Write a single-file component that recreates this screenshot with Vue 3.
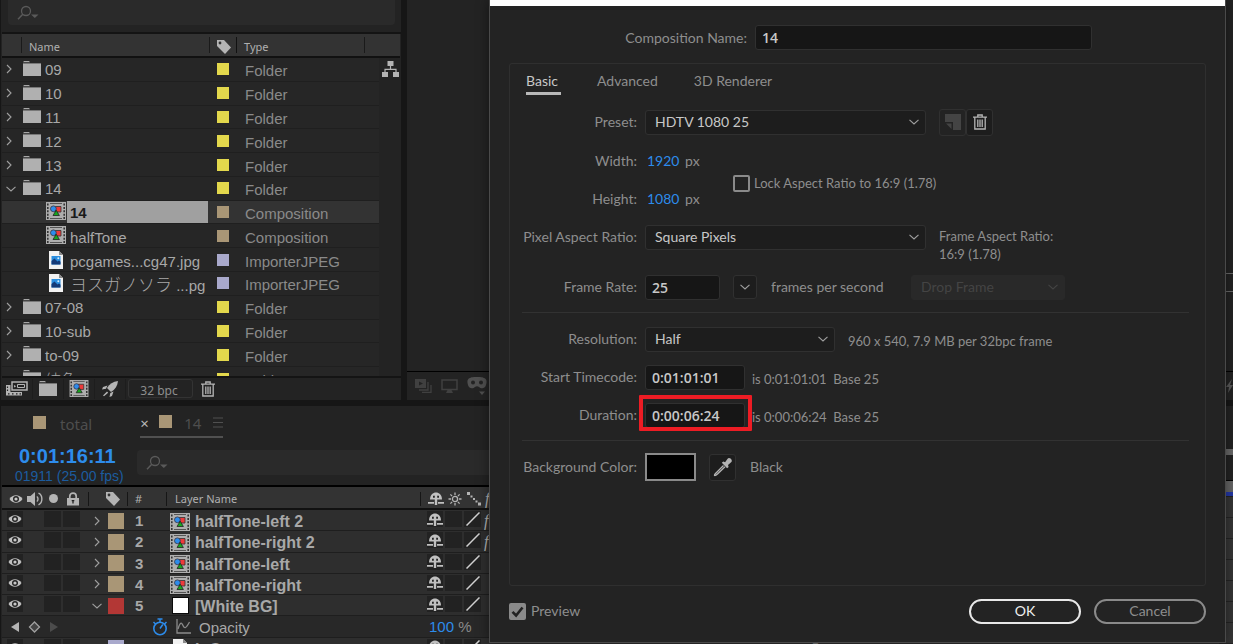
<script setup>
import { ref } from 'vue'

const YELLOW = '#e3d84c'
const SAND = '#a99676'
const LAVENDER = '#a9a9cc'

const items = [
  { name: '09', kind: 'folder', color: YELLOW, type: 'Folder' },
  { name: '10', kind: 'folder', color: YELLOW, type: 'Folder' },
  { name: '11', kind: 'folder', color: YELLOW, type: 'Folder' },
  { name: '12', kind: 'folder', color: YELLOW, type: 'Folder' },
  { name: '13', kind: 'folder', color: YELLOW, type: 'Folder' },
  { name: '14', kind: 'folder', color: YELLOW, type: 'Folder', open: true },
  { name: '14', kind: 'comp', color: SAND, type: 'Composition', selected: true },
  { name: 'halfTone', kind: 'comp', color: SAND, type: 'Composition' },
  { name: 'pcgames...cg47.jpg', kind: 'image', color: LAVENDER, type: 'ImporterJPEG' },
  { cjk: 'ヨスガノソラ', name: ' ...pg', kind: 'image', color: LAVENDER, type: 'ImporterJPEG' },
  { name: '07-08', kind: 'folder', color: YELLOW, type: 'Folder' },
  { name: '10-sub', kind: 'folder', color: YELLOW, type: 'Folder' },
  { name: 'to-09', kind: 'folder', color: YELLOW, type: 'Folder' },
  { cjk: '纯色', name: '', kind: 'folder', color: YELLOW, type: 'Folder', open: true },
]

const layers = [
  { n: 1, name: 'halfTone-left 2', kind: 'comp', color: SAND, fx: true },
  { n: 2, name: 'halfTone-right 2', kind: 'comp', color: SAND, fx: true },
  { n: 3, name: 'halfTone-left', kind: 'comp', color: SAND },
  { n: 4, name: 'halfTone-right', kind: 'comp', color: SAND },
  { n: 5, name: '[White BG]', kind: 'solid', color: '#b33735', open: true },
]

const compName = ref('14')
const frameRate = ref('25')
const startTimecode = ref('0:01:01:01')
const duration = ref('0:00:06:24')
const lockAspect = ref(false)
const preview = ref(true)
const tabs = ['Basic', 'Advanced', '3D Renderer']
const activeTab = ref('Basic')
</script>

<template>
  <div class="app">
    <svg class="sprite" aria-hidden="true">
      <symbol id="i-folder" viewBox="0 0 18 15">
        <path d="M1 0h5l1 1.3H0z" fill="#a8a8a8" />
        <path d="M0 2.4h18V15H0z" fill="#b0b0b0" />
      </symbol>
      <symbol id="i-comp" viewBox="0 0 20 18">
        <path d="M0 0h20v18H0z" fill="#aeaeae" />
        <path d="M1 1.5h1.6v2H1zm0 3.4h1.6v2H1zm0 3.4h1.6v2H1zm0 3.4h1.6v2H1zm0 3.3h1.6v2H1zM17.4 1.5H19v2h-1.6zm0 3.4H19v2h-1.6zm0 3.4H19v2h-1.6zm0 3.4H19v2h-1.6zm0 3.3H19v2h-1.6z" fill="#333" />
        <path d="M4 1.5h12M4 16.5h12" stroke="#555" />
        <path d="M9.500 4.500h5.500v5.500h-5.500z" fill="#ee3a3a" stroke="#333" stroke-width=".8" />
        <circle cx="7.400" cy="6.800" r="2.900" fill="#2d8ceb" stroke="#334" stroke-width=".8" />
        <path d="M10.200 8.200l3.200 5.300H7z" fill="#17a51f" stroke="#222" stroke-width=".8" />
      </symbol>
      <symbol id="i-image" viewBox="0 0 14 18">
        <path d="M0 0h10l4 4v14H0z" fill="#f2f2f2" />
        <path d="M10 0v4h4z" fill="#8c8c8c" />
        <path d="M2.5 5h9v8.500h-9z" fill="#2b8fe0" />
        <path d="M2.500 10l3-2.500 3 3 1.500-1 1.500 1.200v2.800h-9z" fill="#143a78" />
        <circle cx="9.300" cy="7.200" r="1" fill="#d8efff" />
      </symbol>
      <symbol id="i-tag" viewBox="0 0 16 16">
        <path d="M1 1h7l7 7.500L9 15 1 7z" fill="#b4b4b4" />
        <circle cx="4" cy="4" r="1.400" fill="#333" />
      </symbol>
      <symbol id="i-right" viewBox="0 0 8 12">
        <path d="M2 2l4 4-4 4" fill="none" stroke="currentColor" stroke-width="1.100" />
      </symbol>
      <symbol id="i-down" viewBox="0 0 12 8">
        <path d="M1.500 1.800L6 6l4.500-4.200" fill="none" stroke="currentColor" stroke-width="1.100" />
      </symbol>
      <symbol id="i-search" viewBox="0 0 22 16">
        <circle cx="9" cy="6" r="4.500" fill="none" stroke="#5a5a5a" stroke-width="1.300" />
        <path d="M5.800 9.200L1 14.200" stroke="#5a5a5a" stroke-width="1.500" />
        <path d="M14 9.500h7.500L17.800 13z" fill="#5a5a5a" />
      </symbol>
      <symbol id="i-flow" viewBox="0 0 17 17">
        <path d="M5.500 0h6v5h-6zM0 11h6v5H0zM11 11h6v5h-6z" fill="#b4b4b4" />
        <path d="M8.500 5v3M3 11V8.300h11V11" fill="none" stroke="#b4b4b4" stroke-width="1.200" />
      </symbol>
      <symbol id="i-trash" viewBox="0 0 14 16">
        <path d="M0 3.200h14M4.800 3V1h4.400v2M1.800 3.500V15h10.400V3.500M4.800 5.500v7.500M7 5.500v7.500M9.200 5.500v7.500" fill="none" stroke="#b4b4b4" stroke-width="1.300" />
      </symbol>
      <symbol id="i-interpret" viewBox="0 0 22 15">
        <path d="M6 1h15v8H6z" fill="none" stroke="#b4b4b4" stroke-width="1.500" />
        <path d="M11.500 3.500h7v3h-7z" fill="none" stroke="#b4b4b4" />
        <path d="M8 4l2.200 1.300L8 6.500z" fill="#b4b4b4" />
        <path d="M0 4h4.500v7H16v3.500H0z" fill="#b4b4b4" />
        <path d="M1.500 5.500v1.500M1.500 8.500V10M2 12.800h1.500M6 12.800h1.500M10 12.800h1.500M13.500 12.800H15" stroke="#222" stroke-width="1.200" />
      </symbol>
      <symbol id="i-rocket" viewBox="0 0 16 16">
        <path d="M16 0c-5 .6-8.500 3-11 7l4 4c4-2.500 6.500-6 7-11z" fill="#b4b4b4" />
        <path d="M5.500 4.500L1 6 0 8.500l4-.8zM11.500 10.500L10 15l-2.500 1 .8-4zM5 10.500l1.200 1.200L2 15.200 1 14.500z" fill="#b4b4b4" />
      </symbol>
      <symbol id="i-eye" viewBox="0 0 14 10">
        <path d="M.5 5C3.500 0 10.500 0 13.500 5 10.500 10 3.500 10 .5 5z" fill="#c0c0c0" />
        <circle cx="7" cy="5" r="3" fill="#252525" />
        <circle cx="7" cy="5" r="1.600" fill="#c8c8c8" />
      </symbol>
      <symbol id="i-speaker" viewBox="0 0 16 14">
        <path d="M0 4h3.500L8 0v14l-4.500-4H0z" fill="#b4b4b4" />
        <path d="M9.800 4.500c1.600 1 1.600 4 0 5M11.500 1.200c4.500 2.200 4.500 9.400 0 11.600" fill="none" stroke="#b4b4b4" stroke-width="1.400" />
      </symbol>
      <symbol id="i-lock" viewBox="0 0 12 14">
        <path d="M2.800 7V4.200c0-4.200 6.400-4.200 6.400 0V7" fill="none" stroke="#b4b4b4" stroke-width="1.700" />
        <path d="M0 6h12v7.500H0z" fill="#b4b4b4" />
        <path d="M6 8v3.500M4.700 8.700h2.600" stroke="#222" stroke-width="1.300" />
      </symbol>
      <symbol id="i-shy" viewBox="0 0 16 13">
        <path d="M2 7.500C2 -1.900 14 -1.900 14 7.500z" fill="#c0c0c0" />
        <path d="M5 3.800h2v2H5zM9 3.800h2v2H9z" fill="#252525" />
        <path d="M8 4v9" stroke="#c0c0c0" stroke-width="2.400" />
        <path d="M0 10.800h6M10 10.800h6" stroke="#c0c0c0" stroke-width="1.800" />
      </symbol>
      <symbol id="i-sun" viewBox="0 0 14 14">
        <circle cx="7" cy="7" r="2.600" fill="none" stroke="#b4b4b4" stroke-width="1.300" />
        <path d="M7 .5v2.500M7 11v2.500M.5 7H3M11 7h2.500M2.400 2.400l1.700 1.700M9.900 9.900l1.700 1.700M11.600 2.400L9.900 4.100M4.100 9.900l-1.700 1.700" stroke="#b4b4b4" stroke-width="1.300" />
      </symbol>
      <symbol id="i-quality" viewBox="0 0 14 14">
        <path d="M0 0h3v3H0zM3.500 3.500h2v2h-2zM6 6h2v2H6zM8.500 8.500h2v2h-2zM11 10.500h3v3h-3z" fill="#b4b4b4" />
      </symbol>
      <symbol id="i-slash" viewBox="0 0 14 14">
        <path d="M.5 13.500l13-13" stroke="#d0d0d0" stroke-width="1.500" />
      </symbol>
      <symbol id="i-watch" viewBox="0 0 16 18">
        <circle cx="8" cy="10.500" r="6.200" fill="none" stroke="#2d8ceb" stroke-width="1.600" />
        <path d="M5.500 1h5M8 1v3M8 10.500l2.800-4M1.500 4l2 2M14.500 4l-2 2" stroke="#2d8ceb" stroke-width="1.500" />
      </symbol>
      <symbol id="i-graph" viewBox="0 0 15 15">
        <path d="M1 0v14h14" fill="none" stroke="#8a8a8a" stroke-width="1.300" />
        <path d="M2 10c2-7 3.500-7 5-3.500s3 3 6.500-3.500" fill="none" stroke="#8a8a8a" stroke-width="1.300" />
      </symbol>
      <symbol id="i-preset" viewBox="0 0 16 16">
        <path d="M0 0h16v16H8V8H0z" fill="#444" />
        <path d="M1 9.500h5.500V15z" fill="#444" />
      </symbol>
      <symbol id="i-dropper" viewBox="0 0 20 20">
        <path d="M10.500 8.500L3 16c-1.500 1.500-1.800 1.600-1.500 2.500.9.300 1.500 0 3-1.500L12 9.800" fill="none" stroke="#b4b4b4" stroke-width="1.300" />
        <path d="M8.800 5.800l1.500-1.300 1.800.8 2.500-3.500c1.500-2 5.500.8 3.800 3.300L15 8l.6 2-1.500 1.300z" fill="#b4b4b4" />
      </symbol>
      <symbol id="i-tick" viewBox="0 0 17 17">
        <path d="M3.500 8.800l3.600 3.700 6.400-8" fill="none" stroke="#232323" stroke-width="2.600" />
      </symbol>
    </svg>

    <div class="top">
      <section class="project">
        <div class="search"><svg class="s-22"><use href="#i-search" /></svg></div>
        <div class="list">
          <table>
            <thead>
              <tr>
                <th class="h-name">Name</th>
                <th class="h-tag"><svg class="s-16"><use href="#i-tag" /></svg></th>
                <th class="h-type">Type</th>
                <th class="h-rest"></th>
              </tr>
            </thead>
            <tbody>
              <tr v-for="(it, i) in items" :key="i" :class="{ sel: it.selected }">
                <td class="twist">
                  <template v-if="it.kind === 'folder'">
                    <svg v-if="it.open" class="c-down"><use href="#i-down" /></svg>
                    <svg v-else class="c-right"><use href="#i-right" /></svg>
                  </template>
                </td>
                <td class="name" :class="'k-' + it.kind">
                  <svg :class="'g-' + it.kind"><use :href="'#i-' + it.kind" /></svg>
                  <span class="label"><span v-if="it.cjk" class="cjk">{{ it.cjk }}</span>{{ it.name }}</span>
                </td>
                <td class="swatch"><i :style="{ background: it.color }"></i></td>
                <td class="type">{{ it.type }}</td>
              </tr>
            </tbody>
          </table>
          <button class="flow" aria-label="Project flowchart"><svg class="s-17"><use href="#i-flow" /></svg></button>
        </div>
        <footer class="tools">
          <button aria-label="Interpret footage"><svg class="t-int"><use href="#i-interpret" /></svg></button>
          <button aria-label="New folder"><svg class="g-folder"><use href="#i-folder" /></svg></button>
          <button aria-label="New composition"><svg class="t-comp"><use href="#i-comp" /></svg></button>
          <button aria-label="Project settings"><svg class="s-16"><use href="#i-rocket" /></svg></button>
          <button class="bpc">32 bpc</button>
          <button class="bin" aria-label="Delete"><svg class="t-trash"><use href="#i-trash" /></svg></button>
        </footer>
      </section>

      <section class="viewer">
        <div class="stage"><div class="frame"></div></div>
        <div class="viewbar">
          <svg width="17" height="14" viewBox="0 0 17 14">
            <path d="M0 0h11v9H0z" fill="#404040" /><path d="M4 2.500l4 2-4 2z" fill="#232323" />
            <path d="M13 3v8H4M16 6v7.300H7" fill="none" stroke="#404040" stroke-width="1.300" />
          </svg>
          <svg width="17" height="14" viewBox="0 0 17 14">
            <path d="M1 1h15v9.500H1z" fill="none" stroke="#404040" stroke-width="1.500" />
            <path d="M6.500 11h4l1.500 3H5z" fill="#404040" />
          </svg>
          <svg width="20" height="18" viewBox="0 0 20 18">
            <path d="M3 1c2-1.500 12-1.500 14 0 3 1 3 4 2 7-1 4-5 4-7 2-1-1-3-1-4 0-2 2-6 2-7-2-1-3-1-6 2-7z" fill="#505050" />
            <circle cx="6" cy="5.500" r="2" fill="#232323" /><circle cx="14" cy="5.500" r="2" fill="#232323" />
            <path d="M12 14.500h6L15 18z" fill="#505050" />
          </svg>
          <svg class="bolt" width="8" height="14" viewBox="0 0 8 14"><path d="M7 0L1 8h3l-1 6 5-8H5z" fill="#5a5a5a" /></svg>
        </div>
      </section>
    </div>

    <section class="timeline">
      <div class="layers">
        <nav class="tabs">
          <button class="tab total"><i></i>total</button>
          <button class="tab current"><b>×</b><i></i>14
            <svg width="10" height="11" viewBox="0 0 10 11"><path d="M0 1h10M0 5.500h10M0 10h10" stroke="#505050" stroke-width="1.200" /></svg>
          </button>
        </nav>
        <div class="clock">
          <div class="times"><strong>0:01:16:11</strong><span>01911 (25.00 fps)</span></div>
          <div class="find"><svg class="s-22"><use href="#i-search" /></svg></div>
        </div>
        <table>
          <thead>
            <tr>
              <th><svg class="e"><use href="#i-eye" /></svg></th>
              <th><svg width="16" height="14"><use href="#i-speaker" /></svg></th>
              <th><i class="dot"></i></th>
              <th><svg width="12" height="14"><use href="#i-lock" /></svg></th>
              <th class="bar"></th>
              <th><svg class="s-16 tagmark"><use href="#i-tag" /></svg></th>
              <th class="num bar">#</th>
              <th class="wide">Layer Name</th>
              <th><svg class="shy"><use href="#i-shy" /></svg></th>
              <th><svg width="14" height="14"><use href="#i-sun" /></svg></th>
              <th><svg width="14" height="14"><use href="#i-quality" /></svg></th>
              <th class="fx">f</th>
            </tr>
          </thead>
          <tbody>
            <tr v-for="l in layers" :key="l.n">
              <td class="box"><svg class="e"><use href="#i-eye" /></svg></td>
              <td></td>
              <td class="box"></td>
              <td class="box"></td>
              <td class="tw">
                <svg v-if="l.open" class="c-down"><use href="#i-down" /></svg>
                <svg v-else class="c-right"><use href="#i-right" /></svg>
              </td>
              <td class="chip"><i :style="{ background: l.color }"></i></td>
              <td class="num">{{ l.n }}</td>
              <td class="ico">
                <svg v-if="l.kind === 'comp'" class="g-comp"><use href="#i-comp" /></svg>
                <i v-else class="solid"></i>
              </td>
              <td class="lname">{{ l.name }}</td>
              <td class="box"><svg class="shy"><use href="#i-shy" /></svg></td>
              <td class="box"></td>
              <td class="box"><svg width="14" height="14"><use href="#i-slash" /></svg></td>
              <td class="fx">{{ l.fx ? 'f' : '' }}</td>
            </tr>
            <tr class="prop">
              <td class="nav">
                <svg width="48" height="12" viewBox="0 0 48 12">
                  <path d="M8 1v10L0 6z" fill="#b4b4b4" />
                  <path d="M23.500 1l5 5-5 5-5-5z" fill="#444" stroke="#a0a0a0" stroke-width="1.300" />
                  <path d="M39 1v10l8-5z" fill="#4c4c4c" />
                </svg>
              </td>
              <td class="pname">
                <svg width="16" height="18"><use href="#i-watch" /></svg>
                <svg width="15" height="15"><use href="#i-graph" /></svg>
                <span>Opacity</span>
              </td>
              <td class="pval"><b>100</b> %</td>
            </tr>
            <tr>
              <td class="box"><svg class="e"><use href="#i-eye" /></svg></td>
              <td></td>
              <td class="box"></td>
              <td class="box"></td>
              <td class="tw"></td>
              <td class="chip"><i class="lav"></i></td>
              <td class="num">6</td>
              <td class="ico"><svg class="g-image"><use href="#i-image" /></svg></td>
              <td class="lname">InCon</td>
              <td class="box"><svg class="shy"><use href="#i-shy" /></svg></td>
              <td class="box"></td>
              <td class="box"><svg width="14" height="14"><use href="#i-slash" /></svg></td>
              <td></td>
              <td class="mode">Normal</td>
              <td class="mode">None</td>
              <td class="mode">◎ &nbsp;None</td>
            </tr>
          </tbody>
        </table>
      </div>
      <div class="lanes">
        <div class="zoombar"></div>
        <div class="ruler"></div>
        <div class="lane" v-for="n in 7" :key="n"></div>
      </div>
    </section>

    <form class="dialog" role="dialog" aria-label="Composition Settings" @submit.prevent>
      <div class="title"></div>
      <div class="namerow">
        <label for="cname">Composition Name:</label>
        <input id="cname" v-model="compName" class="field" type="text" />
      </div>

      <div class="panel">
        <div class="ptabs" role="tablist">
          <button v-for="t in tabs" :key="t" type="button" role="tab" :aria-selected="t === activeTab"
            :class="{ on: t === activeTab }" @click="activeTab = t">{{ t }}</button>
        </div>

        <div class="row first">
          <label class="lab" for="preset">Preset:</label>
          <span class="sel-wrap w-l"><select id="preset"><option>HDTV 1080 25</option></select><svg class="c-down"><use href="#i-down" /></svg></span>
          <span class="pair">
            <button type="button" class="sq off" disabled aria-label="Save preset"><svg class="s-16"><use href="#i-preset" /></svg></button>
            <button type="button" class="sq" aria-label="Delete preset"><svg class="t-trash"><use href="#i-trash" /></svg></button>
          </span>
        </div>

        <div class="dims">
          <div class="stack">
            <div class="row"><span class="lab">Width:</span><span class="px"><a href="#">1920</a> px</span></div>
            <div class="row"><span class="lab">Height:</span><span class="px"><a href="#">1080</a> px</span></div>
          </div>
          <label class="check small"><span class="cb"><input v-model="lockAspect" type="checkbox" /><svg v-if="lockAspect"><use href="#i-tick" /></svg></span>Lock Aspect Ratio to 16:9 (1.78)</label>
        </div>

        <div class="row">
          <label class="lab" for="par">Pixel Aspect Ratio:</label>
          <span class="sel-wrap w-l"><select id="par"><option>Square Pixels</option></select><svg class="c-down"><use href="#i-down" /></svg></span>
          <span class="far small">Frame Aspect Ratio:<br />16:9 (1.78)</span>
        </div>

        <div class="row rate">
          <label class="lab" for="rate">Frame Rate:</label>
          <input id="rate" v-model="frameRate" class="field w-s" type="text" />
          <button type="button" class="sq drop" aria-label="Frame rates"><svg class="c-down"><use href="#i-down" /></svg></button>
          <span class="fps">frames per second</span>
          <span class="sel-wrap dis"><select disabled aria-label="Drop frame"><option>Drop Frame</option></select><svg class="c-down"><use href="#i-down" /></svg></span>
        </div>

        <hr />

        <div class="row">
          <label class="lab" for="res">Resolution:</label>
          <span class="sel-wrap w-m"><select id="res"><option>Half</option></select><svg class="c-down"><use href="#i-down" /></svg></span>
          <span class="note wide small">960 x 540, 7.9 MB per 32bpc frame</span>
        </div>
        <div class="row">
          <label class="lab" for="start">Start Timecode:</label>
          <input id="start" v-model="startTimecode" class="field w-t" type="text" />
          <span class="note small">is 0:01:01:01&nbsp; Base 25</span>
        </div>
        <div class="row">
          <label class="lab" for="dur">Duration:</label>
          <span class="mark"><input id="dur" v-model="duration" class="field w-t" type="text" /></span>
          <span class="note small">is 0:00:06:24&nbsp; Base 25</span>
        </div>

        <hr />

        <div class="row">
          <span class="lab">Background Color:</span>
          <button type="button" class="colour" aria-label="Background colour"></button>
          <button type="button" class="sq pick" aria-label="Eyedropper"><svg class="s-20"><use href="#i-dropper" /></svg></button>
          <span>Black</span>
        </div>
      </div>

      <div class="foot">
        <label class="check"><span class="cb on"><input v-model="preview" type="checkbox" /><svg v-if="preview"><use href="#i-tick" /></svg></span>Preview</label>
        <button type="submit" class="pill ok">OK</button>
        <button type="button" class="pill">Cancel</button>
      </div>
    </form>
  </div>
</template>

<style>
html, body { margin: 0; background: #161616; }
</style>

<style scoped>
* { box-sizing: border-box; }
.app {
  position: relative;
  display: flex;
  flex-direction: column;
  gap: 6px;
  height: 100vh;
  overflow: hidden;
  background: #161616;
  color: #a8a8a8;
  font-family: "Liberation Sans", "Noto Sans CJK SC", sans-serif;
  font-size: 15px;
}
svg { display: block; flex: none; }
i { display: block; flex: none; font-style: normal; }
button { padding: 0; border: 0; background: none; color: inherit; font: inherit; }
th { font-weight: 400; padding: 0; text-align: left; }
td { padding: 0; }
.sprite { position: absolute; width: 0; height: 0; }
.s-16 { width: 16px; height: 16px; }
.s-17 { width: 17px; height: 17px; }
.s-20 { width: 20px; height: 20px; }
.s-22 { width: 22px; height: 16px; }
.c-right { width: 8px; height: 12px; color: #a0a0a0; }
.c-down { width: 12px; height: 8px; color: #a0a0a0; }
.g-folder { width: 18px; height: 15px; }
.g-comp { width: 20px; height: 18px; }
.g-image { width: 14px; height: 18px; }
.t-int { width: 22px; height: 15px; }
.t-comp { width: 22px; height: 17px; }
.t-trash { width: 14px; height: 16px; }

/* project */
.top { display: flex; gap: 6px; height: 400px; flex: none; }
.project { display: flex; flex-direction: column; width: 401px; padding-left: 2px; background: linear-gradient(90deg, #161616 1px, #232323 1px); }
.search { display: flex; align-items: center; height: 25px; margin: 0 6px 7px; padding-left: 9px; border-radius: 0 0 4px 4px; background: #2a2a2a; }
.list { position: relative; flex: 1; overflow: hidden; border-top: 2px solid #141414; border-bottom: 2px solid #141414; }
.list table, .layers table { display: flex; flex-direction: column; }
.list thead { background: #333; border-bottom: 2px solid #111; margin-right: 1px; font: 11px/22px "Noto Sans", sans-serif; color: #b0b0b0; }
.list thead tr { display: flex; height: 22px; align-items: center; }
.list th { display: flex; align-items: center; height: 16px; padding-top: 3px; line-height: 20px; }
.h-name { width: 189px; margin-left: 19px; padding-left: 7px; border-left: 1px solid #1a1a1a; border-right: 1px solid #1a1a1a; }
.h-tag { width: 27px; padding-left: 6px; border-right: 1px solid #111; }
.h-type { width: 128px; padding-left: 7px; border-right: 1px solid #1a1a1a; }
.list tbody { display: flex; flex-direction: column; height: 333px; margin-right: 22px; }
.list tbody tr { display: flex; flex: 1; align-items: stretch; min-height: 0; border-bottom: 1px solid #1f1f1f; background: #262626; }
.list tbody tr.sel { background: #333; }
.list td { display: flex; align-items: center; }
.twist { width: 21px; padding-left: 3px; }
.twist .c-down { margin-top: 2px; }
.name { flex: none; width: 185px; gap: 4px; white-space: pre; }
.name .g-folder { margin-bottom: 2px; }
.k-folder .label { padding-top: 2px; }
.k-comp, .k-image { padding-left: 23px; }
.k-comp .label, .k-image .label { padding-top: 4px; }
.k-image { padding-left: 26px; gap: 7px; }
.k-comp .g-comp { margin-bottom: 2px; }
.label { line-height: 18px; }
.cjk { font-family: "Noto Sans CJK JP", "Noto Sans CJK SC", sans-serif; font-size: 17px; font-weight: 300; line-height: 18px; }
.k-folder .cjk { font-size: 16px; }
.sel .k-comp { gap: 1px; }
.sel .label { flex: 1; padding: 3px 0 2px 3px; background: #a0a0a0; color: #1a1a1a; font-weight: 700; line-height: 17px; }
.swatch i { width: 12px; height: 12px; }
.swatch { flex: none; width: 37px; padding-left: 9px; }
.type { padding-top: 3px; color: #8a8a8a; }
.flow { position: absolute; top: 27px; right: 2px; }
.tools { display: flex; align-items: center; height: 22px; padding-bottom: 1px; }
.tools button { display: flex; align-items: center; justify-content: center; width: 31px; height: 20px; border-right: 1px solid #1d1d1d; }
.tools .bpc { width: 65px; height: 19px; margin: 0 -1px 0 2px; padding: 4px 3px 0 0; border: 1px solid #333; border-radius: 3px; font: 12px/18px "Noto Sans", sans-serif; color: #8e8e8e; }
.tools .bin { border: 0; }

/* viewer */
.viewer { display: flex; flex-direction: column; flex: 1; background: #232323; }
.stage { flex: 1; padding-top: 273px; border-bottom: 1px solid #000; }
.frame { width: 50%; height: 19px; margin-left: auto; border: solid #6a6a6a; border-width: 1px 0; }
.viewbar { display: flex; align-items: center; gap: 9px; height: 28px; padding-left: 8px; }
.bolt { margin-left: auto; }

/* timeline */
.timeline { display: flex; flex: 1; min-height: 0; overflow: hidden; background: #232323; border-left: 1px solid #161616; padding-left: 1px; }
.layers { flex: 1; min-width: 0; }
.tabs { display: flex; height: 38px; padding: 3px 0 6px 31px; color: #4e4e4e; font: 15px/20px "Noto Sans", sans-serif; }
.tab { display: flex; align-items: center; gap: 14px; }
.tab i { width: 13px; height: 13px; margin-bottom: 3px; background: #a99676; }
.current { margin-left: 48px; gap: 12px; height: 29px; border-bottom: 2px solid #505050; }
.current b { color: #b8b8b8; font-weight: 400; width: 7px; }
.clock { display: flex; align-items: flex-start; height: 43px; border-bottom: 2px solid #000; }
.times { display: flex; flex-direction: column; width: 135px; padding: 1px 0 0 13px; font-size: 14px; line-height: 16px; color: #1c5c9f; }
.times strong { font-size: 20px; line-height: 23px; padding-left: 4px; color: #2d8ceb; }
.find { flex: 1; display: flex; align-items: center; height: 25px; margin-top: 6px; padding-left: 9px; border-radius: 4px; background: #2a2a2a; }
.layers tr {
  display: grid;
  grid-template-columns: 16px 17px 17px 17px 24px 16px 40px 24px 231px 16px 17px 17px 121px 114px 85px 1fr;
  column-gap: 2px;
  padding-left: 5px;
}
.layers thead { background: #333; border-bottom: 2px solid #111; font: 11px/22px "Noto Sans", sans-serif; color: #b0b0b0; }
.layers thead tr { height: 21px; align-items: center; padding: 2px 0 0 6px; }
.layers th { display: flex; align-items: center; justify-content: center; height: 14px; }
.layers th.bar { border: solid #161616; border-width: 0 1px; }
.layers th.bar:nth-child(5) { margin-left: 5px; border-right: 0; }
.tagmark { margin-left: -8px; }
.layers th.num { justify-content: flex-start; }
.layers th.wide { grid-column: 8 / 10; justify-content: flex-start; padding-left: 6px; margin-right: 5px; border-right: 1px solid #161616; }
.dot { width: 9px; height: 9px; border-radius: 50%; background: #b4b4b4; }
.e { width: 14px; height: 10px; }
.shy { width: 16px; height: 13px; }
.layers tbody { display: flex; flex-direction: column; height: 149px; }
.layers tbody tr { flex: 1; min-height: 0; background: #2e2e2e; border-bottom: 1px solid #1e1e1e; }
.layers td { display: flex; align-items: center; justify-content: center; white-space: pre; }
.layers .box { height: 16px; margin-top: 1px; background: #222; }
.layers .tw { padding-left: 6px; }
.chip i { width: 16px; height: 16px; }
.chip .lav { background: #a9a9cc; }
.layers td.num { justify-content: flex-start; }
.layers .num { padding-left: 9px; font-weight: 700; }
.layers th.num { padding-left: 7px; font-weight: 400; }
.solid { width: 17px; height: 17px; border: 1px solid #0a0a0a; background: #fff; }
.ico .g-comp { margin-top: 2px; }
.layers .lname { justify-content: flex-start; padding: 3px 0 0 1px; font-size: 16px; line-height: 18px; font-weight: 700; }
.fx { font-family: "Liberation Serif", serif; font-size: 16px; line-height: 18px; font-style: italic; color: #b4b4b4; }
.layers .fx { justify-content: flex-start; padding-left: 1px; }
.layers tbody .prop { background: #282828; }
.nav { grid-column: 1 / 5; }
.layers .nav { justify-content: flex-start; padding-left: 4px; }
.layers .pname { grid-column: 5 / 10; justify-content: flex-start; gap: 8px; padding-left: 70px; }
.pname span { margin-top: 2px; }
.pval { grid-column: 10 / 14; color: #8a8a8a; }
.layers .pval { justify-content: flex-start; padding-left: 2px; }
.pval b { font-weight: 400; color: #2d8ceb; }
.layers .mode { justify-content: flex-start; font-size: 13px; }
.lanes { display: flex; flex-direction: column; width: 14px; }
.zoombar { height: 10px; margin: 43px 0 25px; background: #6a6a6a; }
.ruler { height: 25px; margin-bottom: 1px; background: #666; border-top: 1px solid #000; border-bottom: 4px solid #2438a8; }
.lane { flex: none; height: 21px; background: #363636; border-bottom: 1px solid #242424; }

/* dialog */
.dialog {
  position: absolute;
  top: 0;
  right: 7px;
  bottom: 1px;
  left: 489px;
  display: flex;
  flex-direction: column;
  border: solid #4a4a4a;
  border-width: 0 1px 1px;
  background: #232323;
  box-shadow: 0 0 12px rgba(0, 0, 0, .45);
  color: #8e8e8e;
  font: 14px/20px Lato, "Open Sans", sans-serif;
}
.title { height: 6px; background: #fff; }
.namerow { display: flex; align-items: center; gap: 8px; margin: 19px 133px 13px 0; }
.namerow label { width: 257px; text-align: right; }
.field {
  height: 25px;
  min-width: 0;
  padding: 0 6px;
  border: 1px solid #303030;
  border-radius: 3px;
  outline: 0;
  background: #161616;
  color: #c8c8c8;
  font: 600 14px/20px "Open Sans", sans-serif;
}
.namerow .field { flex: 1; }
.panel { flex: 1; min-height: 0; margin: 0 19px 12px; border: 1px solid #2f2f2f; border-radius: 3px; }
.ptabs { display: flex; gap: 36px; height: 31px; margin-left: 16px; }
.ptabs button { padding-top: 5px; border-bottom: 3px solid transparent; }
.ptabs .on { padding-right: 3px; border-color: #b8b8b8; color: #c8c8c8; }
.row { display: flex; align-items: center; height: 26px; margin-bottom: 12px; white-space: nowrap; }
.first { margin-top: 14px; }
.lab { width: 127px; margin-right: 8px; text-align: right; flex: none; }
.sel-wrap { position: relative; height: 25px; flex: none; }
.sel-wrap select {
  appearance: none;
  width: 100%;
  height: 25px;
  padding: 0 28px 0 9px;
  border: 1px solid #303030;
  border-radius: 3px;
  background: #1d1d1d;
  color: #c8c8c8;
  font: inherit;
}
.sel-wrap svg { position: absolute; right: 6px; top: 8px; pointer-events: none; }
.w-l { width: 281px; }
.w-m { width: 190px; }
.w-s { width: 75px; }
.w-t { width: 100px; }
.pair { display: flex; margin-left: 13px; }
.sq { display: flex; align-items: center; justify-content: center; width: 27px; height: 27px; border: 1px solid #303030; border-radius: 3px; background: #1d1d1d; }
.sq.off { background: #232323; }
.dims { display: flex; align-items: center; margin-top: 13px; }
.px { width: 88px; padding-left: 2px; }
.px a { margin-right: 2px; color: #2d8ceb; text-decoration: none; }
.small { font-size: 13px; line-height: 18px; }
.check { display: flex; align-items: center; gap: 4px; }
.foot .check { gap: 5px; }
.dims .check { padding-bottom: 6px; }
.cb { position: relative; width: 17px; height: 17px; }
.cb input { appearance: none; display: block; width: 17px; height: 17px; margin: 0; border: 2px solid #8a8a8a; border-radius: 2px; }
.cb input:checked { background: #8a8a8a; }
.cb svg { position: absolute; inset: 0; width: 17px; height: 17px; pointer-events: none; }
.far { align-self: flex-start; margin: 3px 0 0 13px; }
.rate { margin-top: 24px; }
.drop { width: 24px; height: 24px; margin: 0 14px 0 13px; }
.fps { width: 140px; }
.dis { width: 154px; }
.sel-wrap.dis select { border-color: #292929; background: #292929; color: #444; opacity: 1; }
.dis .c-down { color: #444; }
hr { height: 1px; margin: 0 16px 13px 12px; border: 0; background: #323232; }
.note { margin-left: 7px; padding-top: 3px; }
.note.wide { margin-left: 13px; }
.mark { position: relative; }
.mark::after { content: ""; position: absolute; inset: -8px -7px -3px -6px; border: 4px solid #ed1c24; border-radius: 1px; pointer-events: none; }
.mark .field { display: block; }
.colour { width: 51px; height: 28px; border: 2px solid #8a8a8a; background: #000; }
.pick { margin: 0 14px 0 13px; }
.foot { display: flex; align-items: center; gap: 13px; height: 26px; margin: 0 19px 18px; }
.foot .check { margin-right: auto; }
.pill { width: 112px; height: 25px; border: 2px solid #8a8a8a; border-radius: 13px; line-height: 20px; }
.ok { border-color: #e8e8e8; color: #f0f0f0; }
</style>
